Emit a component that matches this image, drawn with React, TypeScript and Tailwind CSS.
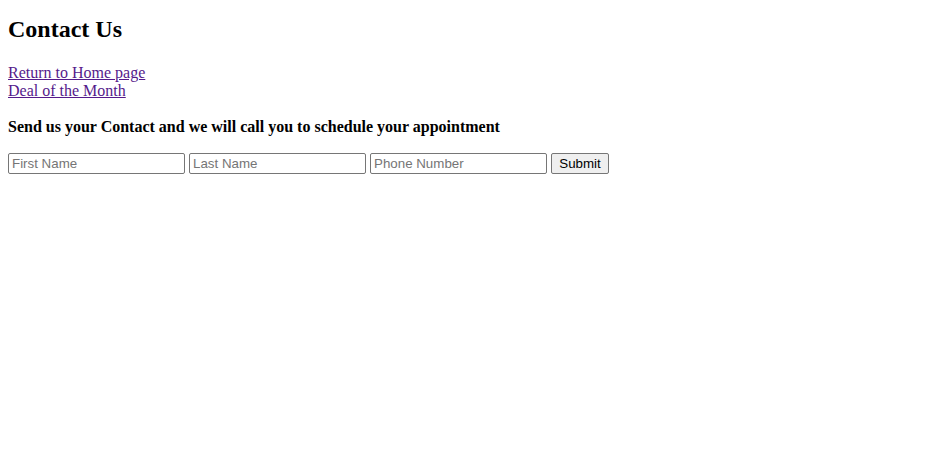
import React from 'react';

const serif = { fontFamily: '"Liberation Serif", "Times New Roman", serif' };

const inputCls =
  "w-[177px] h-[21px] box-border border border-[#767676] rounded-[2px] px-[3px] py-[1px] text-[13.33px] text-black placeholder:text-[#757575] font-['Liberation_Sans',Arial,sans-serif] bg-white outline-none";

export default function App() {
  return (
    <div className="min-h-[456px] bg-white px-2 text-black" style={serif}>
      <h2 className="mt-[15px] text-[24px] leading-[28px] font-bold">Contact Us</h2>

      <div className="mt-[21px] text-[16px] leading-[18px]">
        <a href="#" className="text-[#551a8b] underline">Return to Home page</a>
        <br />
        <a href="#" className="text-[#551a8b] underline">Deal of the Month</a>
      </div>

      <h4 className="mt-[18px] text-[16px] leading-[18px] font-bold">
        Send us your Contact and we will call you to schedule your appointment
      </h4>

      <form className="mt-[17px] flex items-center gap-1" onSubmit={(e) => e.preventDefault()}>
        <input type="text" placeholder="First Name" className={inputCls} />
        <input type="text" placeholder="Last Name" className={inputCls} />
        <input type="text" placeholder="Phone Number" className={inputCls} />
        <button
          type="submit"
          className="h-[21px] w-[58px] box-border border border-[#767676] rounded-[2px] bg-[#efefef] text-[13.33px] text-black font-['Liberation_Sans',Arial,sans-serif]"
        >
          Submit
        </button>
      </form>
    </div>
  );
}
